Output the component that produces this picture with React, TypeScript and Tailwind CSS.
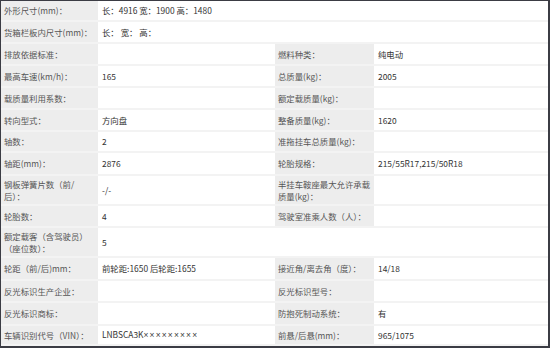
import React from "react";

type Cell = { text?: React.ReactNode; label?: boolean; span?: "col-span-2" | "col-span-3" };
type Row = { h: string; cells: Cell[] };

const rows: Row[] = [
  { h: "h-[21px]", cells: [{ text: "外形尺寸(mm)：", label: true }, { text: "长：4916 宽：1900 高：1480", span: "col-span-3" }] },
  { h: "h-[22px]", cells: [{ text: "货箱栏板内尺寸(mm)：", label: true }, { text: "长： 宽： 高：", span: "col-span-3" }] },
  { h: "h-[22px]", cells: [{ text: "排放依据标准：", label: true }, {}, { text: "燃料种类：", label: true }, { text: "纯电动" }] },
  { h: "h-[22px]", cells: [{ text: "最高车速(km/h)：", label: true }, { text: "165" }, { text: "总质量(kg)：", label: true }, { text: "2005" }] },
  { h: "h-[22px]", cells: [{ text: "载质量利用系数：", label: true }, {}, { text: "额定载质量(kg)：", label: true }, {}] },
  { h: "h-[22px]", cells: [{ text: "转向型式：", label: true }, { text: "方向盘" }, { text: "整备质量(kg)：", label: true }, { text: "1620" }] },
  { h: "h-[21px]", cells: [{ text: "轴数：", label: true }, { text: "2" }, { text: "准拖挂车总质量(kg)：", label: true }, {}] },
  { h: "h-[23px]", cells: [{ text: "轴距(mm)：", label: true }, { text: "2876" }, { text: "轮胎规格：", label: true }, { text: "215/55R17,215/50R18" }] },
  {
    h: "h-[30px]",
    cells: [
      { text: <>钢板弹簧片数（前/<br />后）：</>, label: true },
      { text: "-/-" },
      { text: <>半挂车鞍座最大允许承载<br />质量(kg)：</>, label: true },
      {},
    ],
  },
  { h: "h-[22px]", cells: [{ text: "轮胎数：", label: true }, { text: "4" }, { text: "驾驶室准乘人数（人）：", label: true }, {}] },
  {
    h: "h-[30px]",
    cells: [{ text: <>额定载客（含驾驶员）<br />（座位数）：</>, label: true }, { text: "5" }, { span: "col-span-2" }],
  },
  { h: "h-[23px]", cells: [{ text: "轮距（前/后)mm：", label: true }, { text: "前轮距:1650 后轮距:1655" }, { text: "接近角/离去角（度）：", label: true }, { text: "14/18" }] },
  { h: "h-[22px]", cells: [{ text: "反光标识生产企业：", label: true }, {}, { text: "反光标识型号：", label: true }, {}] },
  { h: "h-[23px]", cells: [{ text: "反光标识商标：", label: true }, {}, { text: "防抱死制动系统：", label: true }, { text: "有" }] },
  {
    h: "h-[20px]",
    cells: [
      { text: "车辆识别代号（VIN）：", label: true },
      { text: <>LNBSCA3K<span className="font-['Liberation_Sans',sans-serif] tracking-[1.2px]">×××××××××</span></> },
      { text: "前悬/后悬(mm)：", label: true },
      { text: "965/1075" },
    ],
  },
];

export default function App() {
  return (
    <div className="w-[550px] h-[348px] overflow-hidden bg-white border-t border-l border-r-2 border-b-2 border-[#3b3c44] text-[8.4px] leading-[12.5px] font-['Noto_Sans_CJK_SC','Noto_Sans',sans-serif]">
      {rows.map((row, i) => (
        <div key={i} className={"grid grid-cols-[97px_177px_99px_174px] " + row.h}>
          {row.cells.map((c, j) => (
            <div
              key={j}
              className={
                "flex items-center border-b-2 border-[#f3f3f3] " +
                (c.label ? "bg-[#ededed] text-[#555555] pl-[3px]" : "bg-white text-[#333333] pl-[4px]") +
                (c.span ? " " + c.span : "")
              }
            >
              <span>{c.text}</span>
            </div>
          ))}
        </div>
      ))}
    </div>
  );
}
